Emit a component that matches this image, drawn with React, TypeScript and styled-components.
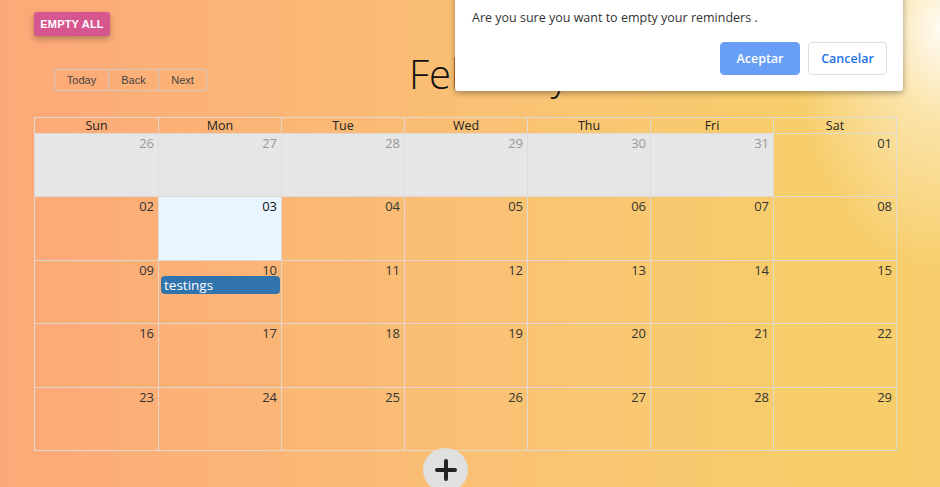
import React from "react";
import styled, { createGlobalStyle } from "styled-components";

const Global = createGlobalStyle`
  html, body { margin: 0; padding: 0; }
  body { font-family: "Open Sans", "Noto Sans", sans-serif; }
`;

const Page = styled.div`
  position: relative;
  width: 940px;
  height: 487px;
  overflow: hidden;
  box-sizing: border-box;
  padding: 12px 43px 0 34px;
  display: flex;
  flex-direction: column;
  & > * { flex-shrink: 0; }
  background:
    radial-gradient(ellipse 150px 240px at 100% 6%, rgba(255,255,255,0.92) 0%, rgba(255,248,225,0.55) 35%, rgba(255,255,255,0) 100%),
    linear-gradient(90deg, #fda878 0%, #fbb676 30%, #f9c573 60%, #f7cd6a 85%, #f7ce6b 100%);
`;

const EmptyButton = styled.button`
  align-self: flex-start;
  width: 76px;
  height: 24px;
  border: none;
  border-radius: 3px;
  background: #d6578f;
  color: #fff;
  font-family: "Liberation Sans", Arial, sans-serif;
  font-weight: 700;
  font-size: 11px;
  letter-spacing: 0.2px;
  box-shadow: 0 3px 6px rgba(0, 0, 0, 0.28);
  padding: 0;
  cursor: pointer;
`;

const Toolbar = styled.div`
  display: flex;
  align-items: flex-start;
  height: 48px;
  margin-top: 33px;
`;

const BtnGroup = styled.div`
  display: flex;
  margin-left: 20px;
`;

const ToolButton = styled.button<{ $w: number; $first?: boolean; $last?: boolean }>`
  width: ${(p) => p.$w}px;
  height: 22px;
  background: transparent;
  border: 1px solid rgba(200, 205, 210, 0.85);
  border-left-width: ${(p) => (p.$first ? 1 : 0)}px;
  border-radius: ${(p) => (p.$first ? "3px 0 0 3px" : p.$last ? "0 3px 3px 0" : "0")};
  color: #444;
  font-family: "Liberation Sans", Arial, sans-serif;
  font-size: 11px;
  padding: 0;
`;

const Title = styled.div`
  margin-left: 202px;
  margin-top: -19px;
  font-family: "Open Sans", sans-serif;
  font-weight: 300;
  font-size: 40px;
  color: #111;
  line-height: 48px;
  white-space: nowrap;
`;

const Calendar = styled.div`
  width: 863px;
  height: 334px;
  box-sizing: border-box;
  border: 1px solid rgba(220, 220, 220, 0.9);
  display: flex;
  flex-direction: column;
`;

const HeaderRow = styled.div`
  display: grid;
  grid-template-columns: repeat(7, 1fr);
  height: 15px;
  flex-shrink: 0;
  border-bottom: 1px solid rgba(220, 220, 220, 0.9);
`;

const HeaderCell = styled.div<{ $first?: boolean }>`
  border-left: ${(p) => (p.$first ? "none" : "1px solid rgba(220,220,220,0.9)")};
  text-align: center;
  font-size: 12.5px;
  line-height: 15px;
  color: #222;
`;

const Week = styled.div<{ $first?: boolean }>`
  flex: 1 1 0;
  display: grid;
  grid-template-columns: repeat(7, 1fr);
  border-top: ${(p) => (p.$first ? "none" : "1px solid rgba(220,220,220,0.9)")};
`;

const Day = styled.div<{ $first?: boolean; $off?: boolean; $today?: boolean }>`
  border-left: ${(p) => (p.$first ? "none" : "1px solid rgba(220,220,220,0.9)")};
  background: ${(p) => (p.$off ? "#e6e6e6" : p.$today ? "#eaf6ff" : "transparent")};
  display: flex;
  flex-direction: column;
  align-items: stretch;
  padding-top: 1px;
`;

const DateLabel = styled.div<{ $off?: boolean; $today?: boolean }>`
  text-align: right;
  padding-right: 4px;
  font-size: 13px;
  line-height: 16px;
  color: ${(p) => (p.$off ? "#999" : p.$today ? "#111" : "#333")};
`;

const Event = styled.div`
  margin: -2px 1px 0 2px;
  background: #3174ad;
  color: #fff;
  border-radius: 4px;
  font-size: 13.5px;
  line-height: 18px;
  padding: 0 3px;
`;

const Fab = styled.button`
  align-self: flex-start;
  margin-top: -3px;
  margin-left: 389px;
  width: 45px;
  height: 44px;
  border-radius: 50%;
  border: none;
  background: #e0e0e0;
  display: flex;
  align-items: center;
  justify-content: center;
  padding: 0;
`;

const Dialog = styled.div`
  position: absolute;
  left: 455px;
  top: -10px;
  width: 448px;
  height: 101px;
  background: #fff;
  border-radius: 0 0 3px 3px;
  box-shadow: 0 2px 6px rgba(0, 0, 0, 0.35);
  box-sizing: border-box;
  padding: 19px 16px 0 17px;
  display: flex;
  flex-direction: column;
`;

const DialogText = styled.div`
  font-family: "Open Sans", "Noto Sans", sans-serif;
  font-size: 12.5px;
  color: #333;
  line-height: 18px;
`;

const DialogActions = styled.div`
  display: flex;
  justify-content: flex-end;
  gap: 8px;
  margin-top: 15px;
`;

const DialogButton = styled.button<{ $primary?: boolean }>`
  width: ${(p) => (p.$primary ? 80 : 79)}px;
  height: 33px;
  border-radius: 4px;
  border: 1px solid ${(p) => (p.$primary ? "#6a9ef3" : "#dadce0")};
  background: ${(p) => (p.$primary ? "#689ef5" : "#fff")};
  color: ${(p) => (p.$primary ? "#fff" : "#1a73e8")};
  font-family: "Open Sans", "Noto Sans", sans-serif;
  font-size: 12.5px;
  font-weight: 600;
  padding: 0;
`;

type Cell = { n: string; off?: boolean; today?: boolean; event?: string };

const weeks: Cell[][] = [
  [
    { n: "26", off: true },
    { n: "27", off: true },
    { n: "28", off: true },
    { n: "29", off: true },
    { n: "30", off: true },
    { n: "31", off: true },
    { n: "01" },
  ],
  [{ n: "02" }, { n: "03", today: true }, { n: "04" }, { n: "05" }, { n: "06" }, { n: "07" }, { n: "08" }],
  [{ n: "09" }, { n: "10", event: "testings" }, { n: "11" }, { n: "12" }, { n: "13" }, { n: "14" }, { n: "15" }],
  [{ n: "16" }, { n: "17" }, { n: "18" }, { n: "19" }, { n: "20" }, { n: "21" }, { n: "22" }],
  [{ n: "23" }, { n: "24" }, { n: "25" }, { n: "26" }, { n: "27" }, { n: "28" }, { n: "29" }],
];

const days = ["Sun", "Mon", "Tue", "Wed", "Thu", "Fri", "Sat"];

export default function App() {
  return (
    <Page>
      <Global />
      <EmptyButton>EMPTY ALL</EmptyButton>
      <Toolbar>
        <BtnGroup>
          <ToolButton $w={55} $first>Today</ToolButton>
          <ToolButton $w={50}>Back</ToolButton>
          <ToolButton $w={48} $last>Next</ToolButton>
        </BtnGroup>
        <Title>February 2021</Title>
      </Toolbar>
      <Calendar>
        <HeaderRow>
          {days.map((d, i) => (
            <HeaderCell key={d} $first={i === 0}>{d}</HeaderCell>
          ))}
        </HeaderRow>
        {weeks.map((w, wi) => (
          <Week key={wi} $first={wi === 0}>
            {w.map((c, ci) => (
              <Day key={ci} $first={ci === 0} $off={c.off} $today={c.today}>
                <DateLabel $off={c.off} $today={c.today}>{c.n}</DateLabel>
                {c.event && <Event>{c.event}</Event>}
              </Day>
            ))}
          </Week>
        ))}
      </Calendar>
      <Fab aria-label="add">
        <svg width="22" height="22" viewBox="0 0 22 22">
          <path d="M11 2v18M2 11h18" stroke="#222" strokeWidth="4" strokeLinecap="round" />
        </svg>
      </Fab>
      <Dialog>
        <DialogText>Are you sure you want to empty your reminders .</DialogText>
        <DialogActions>
          <DialogButton $primary>Aceptar</DialogButton>
          <DialogButton>Cancelar</DialogButton>
        </DialogActions>
      </Dialog>
    </Page>
  );
}
